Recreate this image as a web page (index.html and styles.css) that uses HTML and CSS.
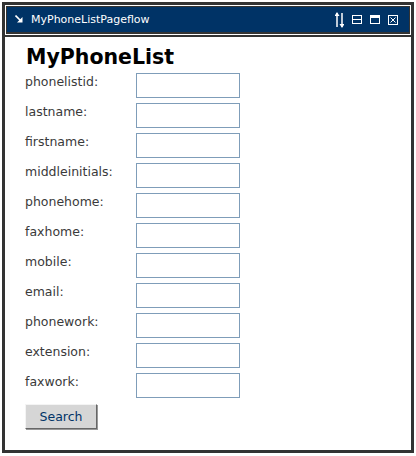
FILE: index.html
```html
<!DOCTYPE html>
<html>
<head>
<meta charset="utf-8">
<link rel="stylesheet" href="styles.css">
</head>
<body>
<div class="portlet">
  <div class="titlewrap">
    <div class="titlebar">
      <svg class="ico-go" width="8" height="8" viewBox="0 0 8 8"><path d="M0.5 0.5 L6 6" stroke="#fff" stroke-width="1.6"/><path d="M7.5 2 L7.5 7.5 L2 7.5 Z" fill="#fff"/></svg>
      <span class="title">MyPhoneListPageflow</span>
      <div class="controls">
        <svg width="9" height="16" viewBox="0 0 9 16"><path d="M2 1 L2 15" stroke="#fff" stroke-width="1.5"/><path d="M2 0 L4.5 4 L-0.5 4 Z" fill="#fff"/><path d="M7 1 L7 15" stroke="#fff" stroke-width="1.5"/><path d="M7 16 L9.5 12 L4.5 12 Z" fill="#fff"/></svg>
        <svg width="10" height="9" viewBox="0 0 10 9"><rect x="0.5" y="0.5" width="9" height="8" fill="none" stroke="#fff"/><path d="M0 4.5 H10" stroke="#fff"/></svg>
        <svg width="10" height="9" viewBox="0 0 10 9"><rect x="0.5" y="0.5" width="9" height="8" fill="none" stroke="#fff"/><path d="M0 2 H10" stroke="#fff" stroke-width="2"/></svg>
        <svg width="10" height="10" viewBox="0 0 10 10"><rect x="0.5" y="0.5" width="9" height="9" fill="none" stroke="#fff"/><path d="M2.5 2.5 L7.5 7.5 M7.5 2.5 L2.5 7.5" stroke="#fff"/></svg>
      </div>
    </div>
  </div>
  <div class="content">
    <h1 class="heading">MyPhoneList</h1>
    <form class="form">
      <div class="row"><label class="lbl">phonelistid:</label><input class="field" type="text"></div>
      <div class="row"><label class="lbl">lastname:</label><input class="field" type="text"></div>
      <div class="row"><label class="lbl">firstname:</label><input class="field" type="text"></div>
      <div class="row"><label class="lbl">middleinitials:</label><input class="field" type="text"></div>
      <div class="row"><label class="lbl">phonehome:</label><input class="field" type="text"></div>
      <div class="row"><label class="lbl">faxhome:</label><input class="field" type="text"></div>
      <div class="row"><label class="lbl">mobile:</label><input class="field" type="text"></div>
      <div class="row"><label class="lbl">email:</label><input class="field" type="text"></div>
      <div class="row"><label class="lbl">phonework:</label><input class="field" type="text"></div>
      <div class="row"><label class="lbl">extension:</label><input class="field" type="text"></div>
      <div class="row"><label class="lbl">faxwork:</label><input class="field" type="text"></div>
      <button class="btn" type="button">Search</button>
    </form>
  </div>
</div>
</body>
</html>
```
FILE: styles.css
```css
html, body {
  margin: 0;
  padding: 0;
  background: #fff;
}
body {
  padding: 2px;
  font-family: "DejaVu Sans", Verdana, sans-serif;
}
.portlet {
  width: 412px;
  height: 451px;
  box-sizing: border-box;
  border: 3px solid #333;
  display: flex;
  flex-direction: column;
  background: #fff;
}
.titlewrap {
  border: 1px solid #fff;
}
.titlebar {
  height: 25px;
  background: #003366;
  border: 1px solid #333;
  border-bottom-width: 2px;
  display: flex;
  align-items: center;
  color: #fff;
}
.ico-go {
  margin-left: 8px;
  margin-top: -2px;
}
.title {
  margin-left: 8px;
  font-size: 11px;
  margin-top: -1px;
}
.controls {
  margin-left: auto;
  margin-right: 11px;
  display: flex;
  align-items: center;
  gap: 8px;
}
.content {
  flex: 1;
  border-top: 2px solid #333;
  padding: 7px 0 0 20px;
}
.heading {
  margin: 0 0 3px 1px;
  font-size: 20.5px;
  line-height: 26px;
  font-weight: bold;
  color: #000;
}
.form {
  display: flex;
  flex-direction: column;
  gap: 5px;
  align-items: flex-start;
}
.row {
  display: flex;
  align-items: flex-start;
}
.lbl {
  width: 111px;
  font-size: 12.5px;
  color: #3a3a3a;
  padding-top: 1px;
  line-height: 16px;
}
.field {
  width: 104px;
  height: 25px;
  box-sizing: border-box;
  border: 1px solid #7f9db9;
  margin: 0;
  padding: 0;
  background: #fff;
}
.btn {
  margin-top: 1px;
  width: 72px;
  height: 25px;
  box-sizing: border-box;
  background: #d6d6d6;
  border: 1px solid;
  border-color: #f4f4f4 #666 #666 #f4f4f4;
  box-shadow: 1px 1px 0 #999;
  color: #003366;
  font-family: "DejaVu Sans", Verdana, sans-serif;
  font-size: 12.5px;
  padding: 0;
}
```
